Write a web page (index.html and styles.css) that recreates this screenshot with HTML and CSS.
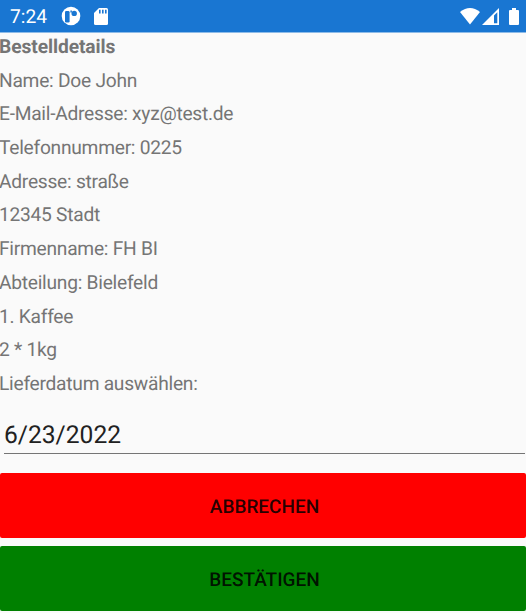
FILE: index.html
```html
<!DOCTYPE html>
<html lang="de">
<head>
<meta charset="utf-8">
<title>Bestelldetails</title>
<link rel="stylesheet" href="styles.css">
</head>
<body>
<header class="status">
  <span class="clock">7:24</span>
  <svg class="app" viewBox="0 0 20 20"><circle cx="10" cy="10" r="9.3" fill="#fff"/><rect x="4" y="5" width="4.600" height="11.500" rx="1.300" fill="#1976d2"/><circle cx="13.200" cy="7.400" r="2.700" fill="#1976d2"/><path d="M9.400 4.600h1.500v2H9.400z" fill="#1976d2"/></svg>
  <svg class="card" viewBox="0 0 14 17"><path d="M5 0h7.5Q14 0 14 1.5v14Q14 17 12.500 17h-11Q0 17 0 15.500V5z" fill="#fff"/><path d="M5 1.800h1.600v3.700H5zM8 1.800h1.600v3.700H8zM11 1.800h1.600v3.700H11z" fill="#1976d2"/></svg>
  <span class="spacer"></span>
  <svg class="wifi" viewBox="0 0 20 17"><path d="M0 4Q10-4 20 4L10 16.500z" fill="#fff"/></svg>
  <svg class="signal" viewBox="0 0 17 17"><path d="M17 0v17H0z" fill="#fff"/><path d="M12 7.500l3.300-3.300v11.100H12z" fill="#1976d2"/></svg>
  <svg class="battery" viewBox="0 0 10 17"><path d="M3 0h4v2h2q1 0 1 1v13q0 1-1 1H1q-1 0-1-1V3q0-1 1-1h2z" fill="#fff"/></svg>
</header>
<main>
  <div class="details">
    <h1>Bestelldetails</h1>
    <p>Name: Doe John</p>
    <p>E-Mail-Adresse: xyz@test.de</p>
    <p>Telefonnummer: 0225</p>
    <p>Adresse: straße</p>
    <p>12345 Stadt</p>
    <p>Firmenname: FH BI</p>
    <p>Abteilung: Bielefeld</p>
    <p>1. Kaffee</p>
    <p>2 * 1kg</p>
    <p>Lieferdatum auswählen:</p>
  </div>
  <div class="date">6/23/2022</div>
  <div class="actions">
    <button class="cancel">ABBRECHEN</button>
    <button class="confirm">BESTÄTIGEN</button>
  </div>
</main>
</body>
</html>
```
FILE: styles.css
```css
* { box-sizing: border-box; }
body {
  margin: 0;
  height: 613px;
  overflow: hidden;
  background: #fafafa;
  color: #757575;
  font-family: Roboto, sans-serif;
  text-rendering: geometricPrecision;
}
.status {
  display: flex;
  height: 33px;
  padding: 0 7px 0 10px;
  background: #1976d2;
  border-bottom: 1px solid #8dbbe8;
  color: #fff;
}
.clock { width: 51px; font-size: 19.2px; line-height: 34px; }
.app { width: 20px; height: 20px; margin-top: 6px; }
.card { width: 14px; height: 17px; margin: 8px 0 0 13px; }
.spacer { flex: 1; }
.wifi { width: 20px; height: 17px; margin-top: 8px; }
.signal { width: 17px; height: 17px; margin: 8px 10px 0 2px; }
.battery { width: 10px; height: 17px; margin-top: 8px; }
.details {
  height: 371px;
  margin-left: -1px;
  font-size: 19.2px;
}
.details h1, .details p {
  margin: 0;
  height: 33.7px;
  font-size: inherit;
  line-height: 27px;
}
.details h1 { letter-spacing: -0.08px; }
.details p { letter-spacing: -0.26px; }
.date {
  height: 50px;
  margin: 0 1px 0 4px;
  border-bottom: 1px solid #757575;
  color: #212121;
  font-size: 24.6px;
  line-height: 63px;
}
.actions {
  display: flex;
  flex-direction: column;
  gap: 8px;
  margin-top: 19px;
}
.actions button {
  height: 65px;
  padding: 2px 0 0 3px;
  border: 0;
  border-radius: 2px;
  color: rgba(0, 0, 0, 0.87);
  font: 500 19px Roboto, sans-serif;
  text-rendering: geometricPrecision;
}
.cancel { background: #f00; }
.confirm { background: #008000; }
```
